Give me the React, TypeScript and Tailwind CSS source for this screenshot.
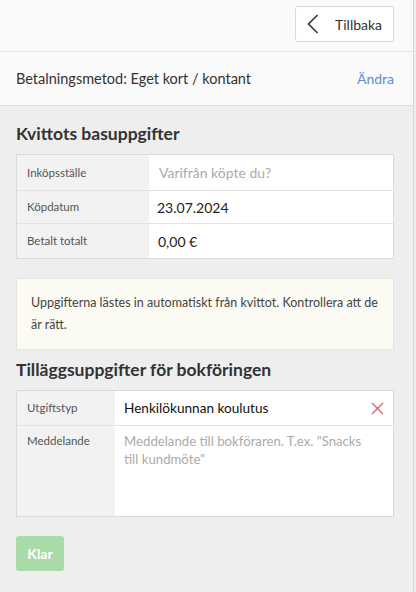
import React from "react";

export default function App() {
  return (
    <div className="w-[416px] h-[592px] bg-[#eeeeee] flex" style={{ fontFamily: "Lato, 'Open Sans', sans-serif" }}>
      <div className="w-[414px] h-full border-r border-[#d6d6d6] flex flex-col">
        <div className="h-[52px] shrink-0 bg-[#fafafa] border-b border-[#e2e2e2] flex items-start justify-end pr-[19px] pt-[6px]">
          <button className="h-[36px] w-[99px] bg-white border border-[#d8d8d8] rounded-[3px] flex items-center pl-[11px] gap-[16px] text-[14px] text-[#333]">
            <svg width="12" height="20" viewBox="0 0 12 20" fill="none" stroke="#333" strokeWidth="1.6">
              <path d="M10.5 1 L1.5 10 L10.5 19" />
            </svg>
            <span>Tillbaka</span>
          </button>
        </div>
        <div className="h-[54px] shrink-0 bg-[#fafafa] border-b border-[#dcdcdc] flex items-center justify-between px-[16px] pr-[19px] text-[14px]">
          <span className="text-[#333] text-[14.5px]">Betalningsmetod: Eget kort / kontant</span>
          <span className="text-[#5a8fd2]">Ändra</span>
        </div>
        <div className="px-[16px] pr-[19px] flex flex-col">
          <h2 className="text-[17.5px] font-bold text-[#333] mt-[17px] mb-[9px] leading-[22px]">Kvittots basuppgifter</h2>
          <div className="border border-[#dadada] bg-white text-[11.5px]">
            <div className="flex h-[36px] border-b border-[#e2e2e2]">
              <div className="w-[132px] bg-[#f2f2f2] flex items-center pl-[10px] text-[#555]">Inköpsställe</div>
              <div className="flex-1 flex items-center pl-[10px] text-[14px] text-[#aaa]">Varifrån köpte du?</div>
            </div>
            <div className="flex h-[33px] border-b border-[#e2e2e2]">
              <div className="w-[132px] bg-[#f2f2f2] flex items-center pl-[10px] text-[#555]">Köpdatum</div>
              <div className="flex-1 flex items-center pl-[8px] text-[14px] text-[#222]">23.07.2024</div>
            </div>
            <div className="flex h-[34px]">
              <div className="w-[132px] bg-[#f2f2f2] flex items-center pl-[10px] text-[#555]">Betalt totalt</div>
              <div className="flex-1 flex items-center pl-[9px] text-[14px] text-[#222]">0,00 €</div>
            </div>
          </div>
          <div className="mt-[19px] h-[72px] bg-[#fcfbf3] border border-[#e8e6da] px-[14px] flex items-center text-[12.5px] leading-[22px] text-[#444]">
            Uppgifterna lästes in automatiskt från kvittot. Kontrollera att de är rätt.
          </div>
          <h2 className="text-[17.5px] font-bold text-[#333] mt-[9px] mb-[9px] leading-[22px]">Tilläggsuppgifter för bokföringen</h2>
          <div className="border border-[#dadada] bg-white text-[11.5px]">
            <div className="flex h-[35px] border-b border-[#e2e2e2]">
              <div className="w-[98px] bg-[#f2f2f2] flex items-center pl-[10px] text-[#555]">Utgiftstyp</div>
              <div className="flex-1 flex items-center justify-between pl-[9px] pr-[9px] text-[13.6px] text-[#111]">
                <span>Henkilökunnan koulutus</span>
                <svg width="13" height="13" viewBox="0 0 13 13" stroke="#e06666" strokeWidth="1.4">
                  <path d="M1 1 L12 12 M12 1 L1 12" />
                </svg>
              </div>
            </div>
            <div className="flex h-[90px]">
              <div className="w-[98px] bg-[#f2f2f2] pl-[10px] pt-[7px] leading-[16px] text-[#555]">Meddelande</div>
              <div className="flex-1 pl-[9px] pr-[16px] pt-[6px] text-[13.2px] leading-[18px] text-[#aaa]">
                Meddelande till bokföraren. T.ex. "Snacks till kundmöte"
              </div>
            </div>
          </div>
          <div className="mt-[19px]">
            <button className="h-[35px] w-[48px] rounded-[3px] bg-[#a9dba9] text-white font-bold text-[14px]">Klar</button>
          </div>
        </div>
      </div>
    </div>
  );
}
